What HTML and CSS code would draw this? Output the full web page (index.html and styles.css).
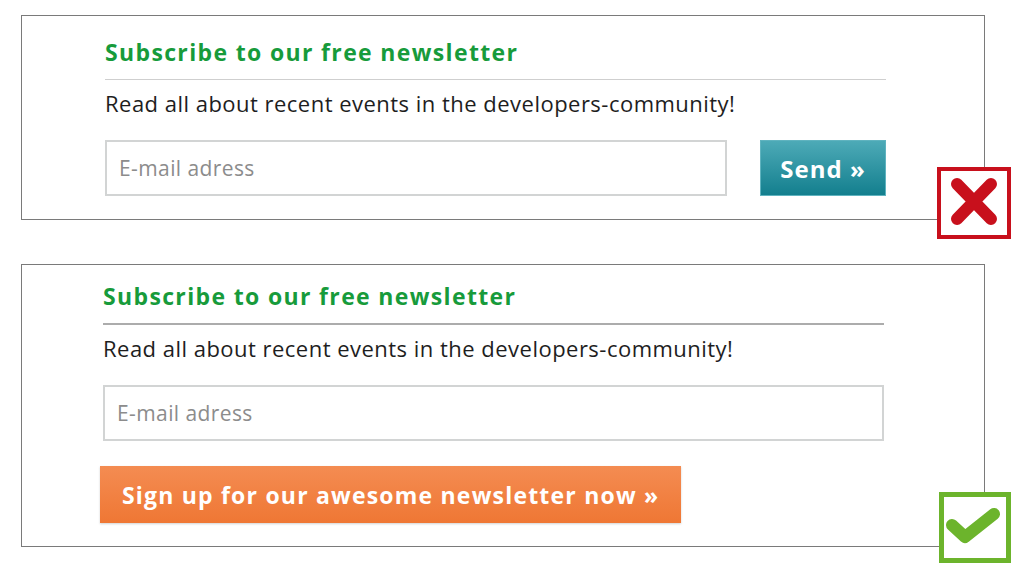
FILE: index.html
```html
<!DOCTYPE html>
<html lang="en">
<head>
<meta charset="utf-8">
<title>Newsletter signup – bad vs good</title>
<link rel="stylesheet" href="styles.css">
</head>
<body>
<main class="page">
  <section class="card card--bad">
    <h2 class="card__title">Subscribe to our free newsletter</h2>
    <p class="card__text">Read all about recent events in the developers-community!</p>
    <form class="form form--inline">
      <input class="form__input" type="text" placeholder="E-mail adress">
      <button class="btn btn--send" type="button">Send »</button>
    </form>
    <div class="verdict verdict--bad">
      <svg viewBox="0 0 66 64" width="66" height="64" aria-hidden="true">
        <path d="M16 13 L50 48 M50 13 L16 48" stroke="#c8101c" stroke-width="12" stroke-linecap="round" fill="none"/>
      </svg>
    </div>
  </section>

  <section class="card card--good">
    <h2 class="card__title">Subscribe to our free newsletter</h2>
    <p class="card__text">Read all about recent events in the developers-community!</p>
    <form class="form form--stacked">
      <input class="form__input" type="text" placeholder="E-mail adress">
      <button class="btn btn--signup" type="button">Sign up for our awesome newsletter now »</button>
    </form>
    <div class="verdict verdict--good">
      <svg viewBox="0 0 62 61" width="62" height="61" aria-hidden="true">
        <path d="M8 28 L21 40 L50 17" stroke="#6cb42c" stroke-width="12" stroke-linecap="round" stroke-linejoin="round" fill="none"/>
      </svg>
    </div>
  </section>
</main>
</body>
</html>
```

FILE: styles.css
```css
* { box-sizing: border-box; }

html, body {
  margin: 0;
  padding: 0;
  background: #ffffff;
}

body {
  min-height: 583px;
  font-family: "Open Sans", "Noto Sans", "Liberation Sans", sans-serif;
  color: #222;
}

.page {
  display: flex;
  flex-direction: column;
  gap: 44px;
  padding: 15px 0 34px 21px;
}

.card {
  position: relative;
  width: 964px;
  border: 1px solid #7a7a7a;
  display: flex;
  flex-direction: column;
}

.card--bad {
  padding: 21px 98px 23px 83px;
}

.card--good {
  padding: 16px 100px 23px 81px;
}

.card__title {
  margin: 0;
  font-size: 23px;
  line-height: 30px;
  font-weight: 700;
  letter-spacing: 1.35px;
  color: #179b3b;
  padding-bottom: 12px;
  border-bottom: 1px solid #cfcfcf;
}

.card--good .card__title {
  border-bottom: 2px solid #acacac;
}

.card__text {
  margin: 9px 0 0;
  font-size: 22px;
  line-height: 28px;
  letter-spacing: 0.48px;
  color: #1e1e1e;
}

.form {
  margin-top: 23px;
  display: flex;
}

.form--inline {
  gap: 33px;
}

.form--stacked {
  flex-direction: column;
  gap: 25px;
  align-items: flex-start;
}

.form__input {
  height: 56px;
  border: 2px solid #d2d4d4;
  background: #fff;
  padding: 0 12px;
  font-family: inherit;
  font-size: 21px;
  letter-spacing: 0.4px;
  color: #333;
  outline: none;
}

.form--inline .form__input {
  flex: 1;
}

.form--stacked .form__input {
  width: 100%;
}

.form__input::placeholder {
  color: #8c8c8c;
}

.btn {
  border: 0;
  font-family: inherit;
  font-weight: 700;
  color: #ffffff;
  cursor: pointer;
}

.btn--send {
  width: 126px;
  height: 56px;
  font-size: 24px;
  letter-spacing: 1px;
  background: linear-gradient(#4daab7, #137f8e);
  border: 1px solid #5fb3bf;
  padding: 0;
}

.btn--signup {
  margin-left: -3px;
  width: 581px;
  height: 57px;
  padding: 0 0 0 22px;
  font-size: 23px;
  letter-spacing: 1.2px;
  text-align: left;
  background: linear-gradient(#f48c52, #ef7734);
  box-shadow: 0 1px 2px rgba(0, 0, 0, 0.18);
}

.verdict {
  position: absolute;
  background: #fff;
  display: flex;
  align-items: center;
  justify-content: center;
}

.verdict--bad {
  right: -27px;
  bottom: -20px;
  width: 74px;
  height: 72px;
  border: 4px solid #c8101c;
}

.verdict--good {
  right: -27px;
  bottom: -17px;
  width: 72px;
  height: 71px;
  border: 5px solid #6cb42c;
}
```
